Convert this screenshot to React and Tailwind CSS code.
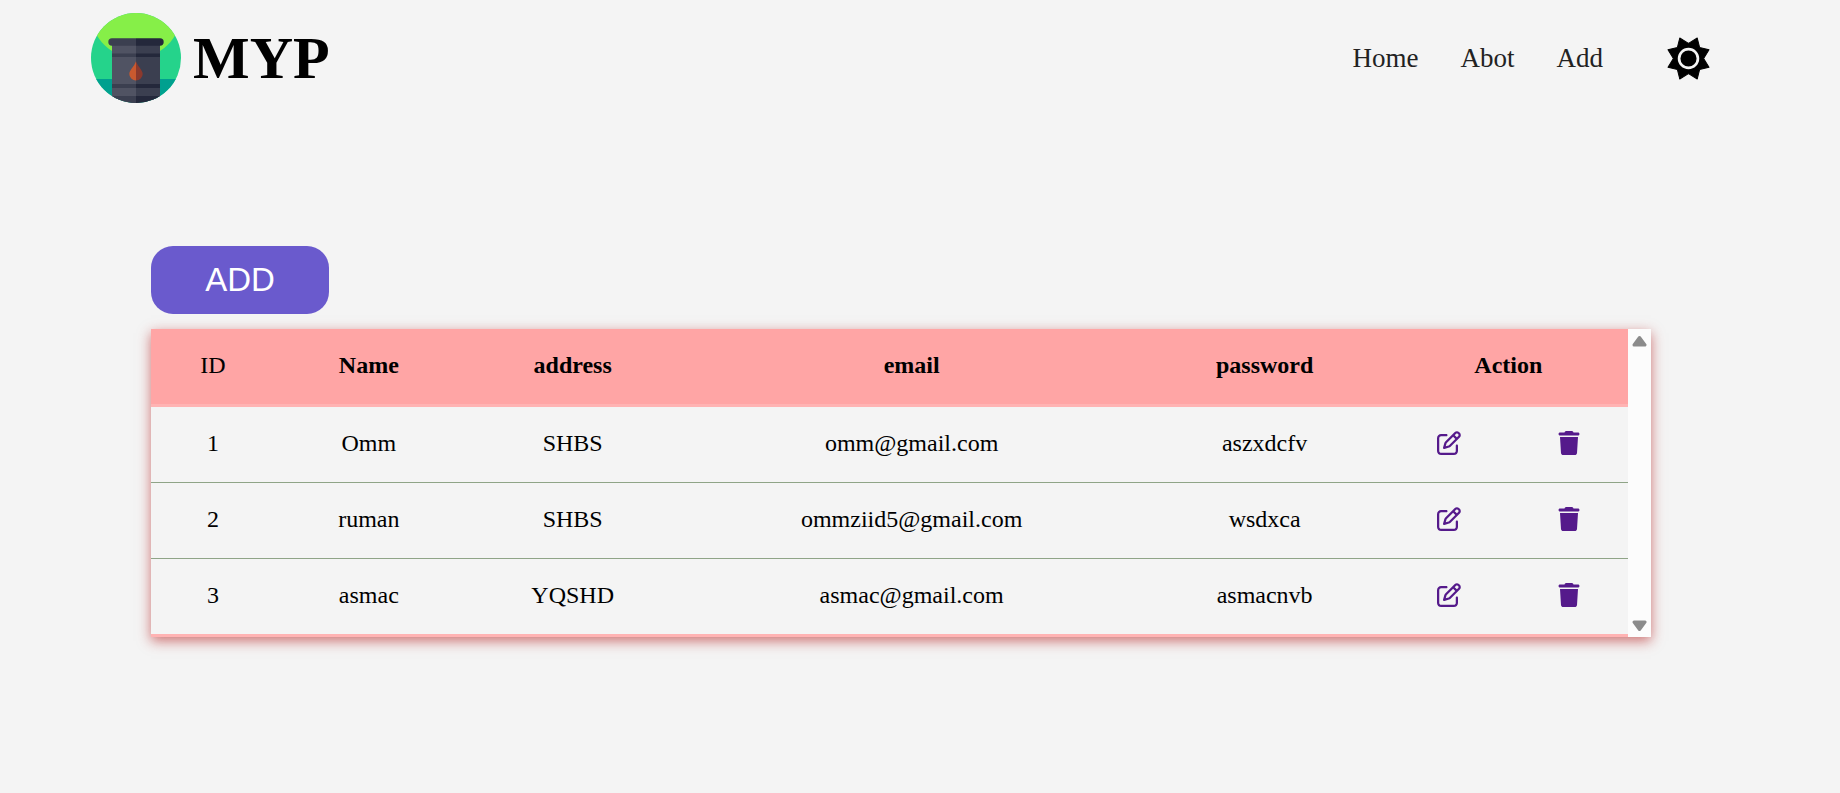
import { FaRegPenToSquare, FaTrash } from 'react-icons/fa6';

const users = [
  { id: 1, name: 'Omm', address: 'SHBS', email: 'omm@gmail.com', password: 'aszxdcfv' },
  { id: 2, name: 'ruman', address: 'SHBS', email: 'ommziid5@gmail.com', password: 'wsdxca' },
  { id: 3, name: 'asmac', address: 'YQSHD', email: 'asmac@gmail.com', password: 'asmacnvb' },
];

function Logo() {
  return (
    <svg viewBox="0 0 90 90" className="size-[90px]" aria-hidden="true">
      <defs>
        <clipPath id="disc">
          <circle cx="45" cy="45" r="45" />
        </clipPath>
      </defs>
      <g clipPath="url(#disc)">
        <rect width="90" height="90" fill="#25d38b" />
        <circle cx="45" cy="0" r="45" fill="#86ef48" />
        <rect y="66" width="90" height="24" fill="#00a08f" />
        <rect x="21" y="30" width="24" height="60" fill="#505363" />
        <rect x="45" y="30" width="24" height="60" fill="#3b3f50" />
        <path d="M21 40.500h24v3.500H21zM21 71h24v4H21zM21 83h24v7H21z" fill="#3b3f50" />
        <path d="M45 40.500h24v3.500H45zM45 71h24v4H45zM45 83h24v7H45z" fill="#24283b" />
        <path d="M45 25.300H21a3.700 3.700 0 0 0 0 7.400h24z" fill="#3b3f50" />
        <path d="M45 25.300h24a3.700 3.700 0 0 1 0 7.400H45z" fill="#24283b" />
        <path d="M45 48.200C43 54 38.300 57 38.300 61A6.700 6.500 0 0 0 45 67.500z" fill="#c9592f" />
        <path d="M45 48.200C47 54 51.700 57 51.700 61A6.700 6.500 0 0 1 45 67.500z" fill="#8b392d" />
      </g>
    </svg>
  );
}

function Sun() {
  return (
    <svg viewBox="0 0 128 128" className="size-[43px]" aria-hidden="true">
      <path
        d="M38 3 64 19 90 3 97 31 125 38 109 64 125 90 97 97 90 125 64 109 38 125 31 97 3 90 19 64 3 38 31 31z"
        fill="currentColor"
        stroke="currentColor"
        strokeWidth="3"
        strokeLinejoin="round"
      />
      <circle cx="64" cy="64" r="28" fill="currentColor" stroke="#f4f4f4" strokeWidth="8" />
    </svg>
  );
}

function Header() {
  return (
    <header className="flex items-center justify-between px-[5%] pt-[13px]">
      <a href="#" className="flex items-center gap-3">
        <Logo />
        <span className="text-[60px] leading-[90px] font-bold">MYP</span>
      </a>
      <nav className="flex items-center gap-[42px] pr-px text-[27px] leading-8 text-[#222]">
        <a href="#home">Home</a>
        <a href="#about">Abot</a>
        <a href="#add">Add</a>
        <button type="button" aria-label="Toggle theme" className="ml-[22px] text-black">
          <Sun />
        </button>
      </nav>
    </header>
  );
}

function ScrollTrack() {
  return (
    <div className="flex w-[23px] shrink-0 flex-col items-center justify-between bg-[#fcfcfc] pt-[6px] pb-[5px]" aria-hidden="true">
      <svg viewBox="0 0 15 12" className="h-3 w-[15px]">
        <path d="M7.500 2.500 13 10H2z" fill="#8b8b8b" stroke="#8b8b8b" strokeWidth="3" strokeLinejoin="round" />
      </svg>
      <svg viewBox="0 0 15 12" className="h-3 w-[15px]">
        <path d="M7.500 9.500 13 2H2z" fill="#8b8b8b" stroke="#8b8b8b" strokeWidth="3" strokeLinejoin="round" />
      </svg>
    </div>
  );
}

function UserTable() {
  return (
    <div className="flex w-full shadow-[0_4px_12px_rgba(184,44,44,0.65)]">
      <table className="w-full table-fixed border-separate border-spacing-0 text-center text-[24px] leading-7 text-black">
        <colgroup>
          <col className="w-[8.4%]" />
          <col className="w-[12.7%]" />
          <col className="w-[14.9%]" />
          <col className="w-[31%]" />
          <col className="w-[16.8%]" />
          <col className="w-[8.2%]" />
          <col className="w-[8%]" />
        </colgroup>
        <thead>
          <tr className="h-[78px] bg-[#ffa5a5] *:border-b-[3px] *:border-[#ffb3b3] *:pb-[3px]">
            <th className="font-normal">ID</th>
            <th>Name</th>
            <th>address</th>
            <th>email</th>
            <th>password</th>
            <th colSpan={2}>Action</th>
          </tr>
        </thead>
        <tbody className="*:last:h-[78px] *:last:*:border-b-[3px] *:last:*:border-[#ffb3b3]">
          {users.map((user) => (
            <tr key={user.id} className="h-[76px] *:border-b *:border-[#8fa487] *:pb-[3px]">
              <td>{user.id}</td>
              <td>{user.name}</td>
              <td>{user.address}</td>
              <td>{user.email}</td>
              <td>{user.password}</td>
              <td>
                <a href={`#edit-${user.id}`} aria-label={`Edit ${user.name}`} className="flex justify-center text-[#551a8b]">
                  <FaRegPenToSquare className="size-6" />
                </a>
              </td>
              <td>
                <a href={`#delete-${user.id}`} aria-label={`Delete ${user.name}`} className="flex justify-center text-[#551a8b]">
                  <FaTrash className="size-6" />
                </a>
              </td>
            </tr>
          ))}
        </tbody>
      </table>
      <ScrollTrack />
    </div>
  );
}

export default function App() {
  return (
    <div className="min-h-screen bg-[#f4f4f4] pr-[39px] pl-px font-['Liberation_Serif',serif] text-black">
      <Header />
      <main className="mx-auto flex w-5/6 flex-col items-start gap-[15px] pt-[143px]">
        <button
          type="button"
          className="h-[68px] w-[178px] rounded-[22px] bg-[#6a5acd] font-['Liberation_Sans',sans-serif] text-[33px] text-white"
        >
          ADD
        </button>
        <UserTable />
      </main>
    </div>
  );
}
